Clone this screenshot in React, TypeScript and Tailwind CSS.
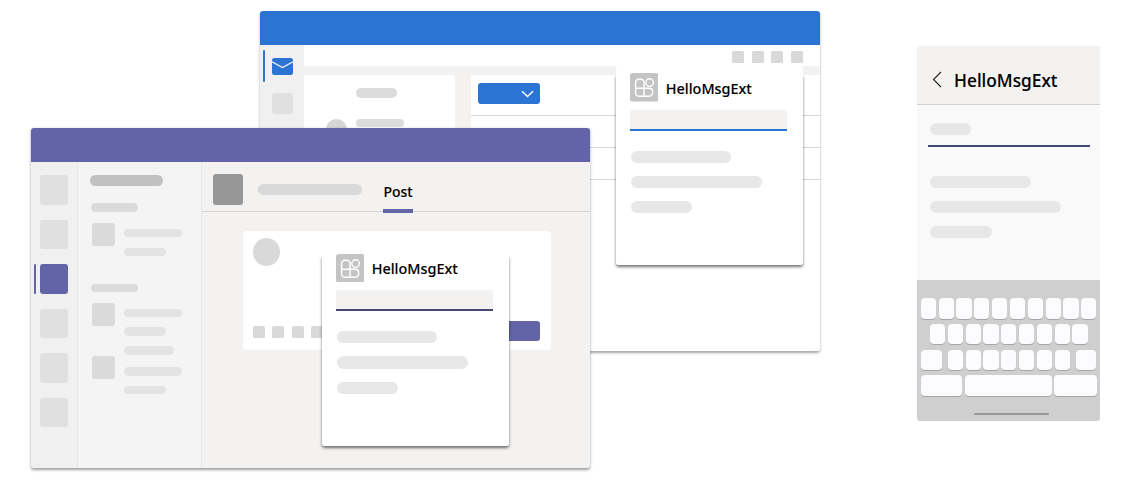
import React from "react";

const FONT = "font-['Noto_Sans','Open_Sans',sans-serif] [-webkit-text-stroke:0.12px_black]";

function Box({ className }: { className: string }) {
  return <div className={`shrink-0 ${className}`} />;
}

function AppIcon() {
  return (
    <svg viewBox="0 0 28.5 28.5" className="h-[28.5px] w-[28.5px] shrink-0">
      <rect width="28.5" height="28.5" rx="2.5" fill="#c4c4c4" />
      <g fill="none" stroke="#fff" strokeWidth="1.4">
        <path d="M14 15.2V9.3a3 3 0 0 0-3-3H8.8a3.2 3.2 0 0 0-3.2 3.2v10.6a3.2 3.2 0 0 0 3.2 3.2h10.6a3.2 3.2 0 0 0 3.2-3.2v-1.9a3 3 0 0 0-3-3H5.6M14 15.2v8.1" />
        <circle cx="19.6" cy="9.6" r="3.8" />
      </g>
    </svg>
  );
}

function ExtensionCard({ place, accent }: { place: string; accent: string }) {
  return (
    <section className={`absolute h-[199px] w-[187px] ${place}`}>
      <div className="absolute inset-x-0 top-2 bottom-0 rounded-[3px] shadow-[0_2px_3px_rgba(0,0,0,0.55)]" />
      <div className="relative flex h-full flex-col rounded-[3px] bg-white px-[14px] pt-[7.2px]">
        <div className="flex items-center gap-[7.5px]">
          <AppIcon />
          <h2 className={`${FONT} pt-[2px] text-[14.4px] leading-5 font-medium whitespace-nowrap text-black`}>HelloMsgExt</h2>
        </div>
        <div className={`mt-2 h-[21px] w-[157.5px] shrink-0 rounded-t-[2px] border-b-2 bg-[#f3f2f1] ${accent}`} />
        <div className="mt-[19.7px] ml-[1px] flex flex-col gap-[13px]">
          <Box className="h-[12.2px] w-[100px] rounded-full bg-[#e7e7e7]" />
          <Box className="h-[12.2px] w-[131px] rounded-full bg-[#e7e7e7]" />
          <Box className="h-[12.2px] w-[61.5px] rounded-full bg-[#e7e7e7]" />
        </div>
      </div>
    </section>
  );
}

function OutlookWindow() {
  return (
    <section className="absolute top-[11.3px] left-[260.3px] h-[340px] w-[559.7px] rounded-[3px] bg-white shadow-[0_1.5px_2.5px_rgba(0,0,0,0.35)]">
      <div className="flex h-full flex-col overflow-hidden rounded-[3px]">
        <header className="h-[33.7px] shrink-0 bg-[#2b74d4]" />
        <div className="flex min-h-0 flex-1">
          <nav className="flex w-[44px] shrink-0 flex-col bg-[#f0f0f0] pt-[5px]">
            <div className="flex items-start">
              <Box className="ml-[2.3px] h-[32px] w-[2.3px] rounded-full bg-[#2b74d4]" />
              <svg viewBox="0 0 21 17" className="mt-[8px] ml-[7.2px] h-[17px] w-[21px]">
                <rect width="21" height="17" rx="2.5" fill="#2b74d4" />
                <path d="M0 3.8 10.5 9.5 21 3.8" fill="none" stroke="#f0f0f0" strokeWidth="1.4" />
              </svg>
            </div>
            <Box className="mt-[11px] ml-[11.3px] h-[21px] w-[21px] rounded-[3px] bg-[#e0e0e0]" />
          </nav>
          <main className="flex min-w-0 flex-1 flex-col">
            <div className="flex h-[21px] shrink-0 justify-end gap-[7.5px] pt-[6px] pr-[17.4px]">
              <Box className="h-[12px] w-[12px] rounded-[1.5px] bg-[#d9d9d9]" />
              <Box className="h-[12px] w-[12px] rounded-[1.5px] bg-[#d9d9d9]" />
              <Box className="h-[12px] w-[12px] rounded-[1.5px] bg-[#d9d9d9]" />
              <Box className="h-[12px] w-[12px] rounded-[1.5px] bg-[#d9d9d9]" />
            </div>
            <Box className="h-[9px] bg-[#f3f2f1]" />
            <div className="flex min-h-0 flex-1 bg-[#f3f2f1]">
              <div className="flex w-[150.5px] flex-col rounded-tr-[2px] bg-white pt-[13px]">
                <Box className="ml-[51.3px] h-[10px] w-[41.5px] rounded-full bg-[#dcdcdc]" />
                <div className="mt-[21px] flex gap-[8.3px] pl-[21.5px]">
                  <Box className="h-[21.5px] w-[21.5px] rounded-full bg-[#d6d6d6]" />
                  <Box className="h-[8px] w-[48.5px] rounded-full bg-[#dcdcdc]" />
                </div>
              </div>
              <div className="ml-[16px] flex flex-1 flex-col bg-white">
                <div className="h-[41px] border-b border-[#d8d8d8] pt-[8px] pl-[7px]">
                  <div className="flex h-[21px] w-[62px] items-center justify-end rounded-[3px] bg-[#2b74d4] pr-[6px]">
                    <svg viewBox="0 0 13 8" className="mt-[2px] h-[8px] w-[13px]">
                      <path d="m1 1.2 5.5 5.3L12 1.2" fill="none" stroke="#fff" strokeWidth="1.5" />
                    </svg>
                  </div>
                </div>
                <Box className="h-[32px] border-b border-[#d8d8d8]" />
                <Box className="h-[32px] border-b border-[#d8d8d8]" />
              </div>
            </div>
          </main>
        </div>
      </div>
      <ExtensionCard place="top-[55px] left-[355.5px]" accent="border-[#2b74d4]" />
    </section>
  );
}

function RailItem({ active = false }: { active?: boolean }) {
  return (
    <div className="flex h-[29.5px] shrink-0">
      <div className={`ml-[3.5px] w-[2px] rounded-full ${active ? "bg-[#6264a7]" : "bg-transparent"}`} />
      <div className={`ml-[4px] w-[28px] rounded-[3px] ${active ? "bg-[#6264a7]" : "bg-[#e0e0e0]"}`} />
    </div>
  );
}

const LINE = "h-[8.5px] rounded-full bg-[#e3e3e3]";

function Group({ widths, className }: { widths: string[]; className: string }) {
  return (
    <div className={`flex items-start gap-[9px] pl-[14.8px] ${className}`}>
      <Box className="h-[23px] w-[23px] rounded-[3px] bg-[#dadada]" />
      <div className="flex flex-col gap-[10.2px] pt-[6px]">
        {widths.map((w, i) => (
          <Box key={i} className={`${LINE} ${w}`} />
        ))}
      </div>
    </div>
  );
}

function TeamsWindow() {
  return (
    <section className="absolute top-[128.2px] left-[30.5px] h-[340px] w-[559.8px] rounded-[3px] bg-[#f3f2f1] shadow-[0_1.5px_3px_rgba(0,0,0,0.38)]">
      <div className="flex h-full flex-col overflow-hidden rounded-[3px]">
        <header className="h-[34px] shrink-0 bg-[#6264a7]" />
        <div className="flex min-h-0 flex-1">
          <nav className="flex w-[47px] shrink-0 flex-col gap-[15px] border-r border-[#e7e7e7] bg-[#f0f0f0] pt-[13.3px]">
            <RailItem />
            <RailItem />
            <RailItem active />
            <RailItem />
            <RailItem />
            <RailItem />
          </nav>
          <aside className="flex w-[124px] shrink-0 flex-col border-r border-[#e7e7e7] bg-[#f4f4f4] pt-[13px]">
            <Box className="ml-[12.5px] h-[11px] w-[73px] rounded-full bg-[#c1c1c1]" />
            <Box className="mt-[17px] ml-[13.8px] h-[8.5px] w-[46.5px] rounded-full bg-[#dadada]" />
            <Group widths={["w-[58px]", "w-[41.5px]"]} className="mt-[11.3px] h-[61px]" />
            <Box className="ml-[13.8px] h-[8.5px] w-[46.5px] rounded-full bg-[#dadada]" />
            <Group widths={["w-[58px]", "w-[41.5px]", "w-[49.5px]"]} className="mt-[10.3px] h-[53.5px]" />
            <Group widths={["w-[58px]", "w-[41.5px]"]} className="[&>div:last-child]:pt-[11px]" />
          </aside>
          <main className="flex min-w-0 flex-1 flex-col">
            <div className="flex h-[50px] shrink-0 items-start border-b border-[#d6d6d6] pl-[11.5px]">
              <Box className="mt-[12.3px] h-[30.5px] w-[30px] rounded-[3px] bg-[#979797]" />
              <Box className="mt-[22.1px] ml-[14.8px] h-[11px] w-[104.5px] rounded-full bg-[#d9d9d9]" />
              <div className="ml-[20.5px] h-[50.6px] w-[30.3px] border-b-[4px] border-[#6264a7]">
                <span className={`${FONT} ml-[0.6px] block pt-[20px] text-[14px] leading-5 font-medium text-black`}>Post</span>
              </div>
            </div>
            <div className="mt-[19px] ml-[41.5px] flex h-[119px] w-[308px] flex-col justify-between rounded-[3px] bg-white pt-[7px] pr-[11px] pb-[8.8px] pl-[9.7px]">
              <Box className="h-[27.5px] w-[27.5px] rounded-full bg-[#d9d9d9]" />
              <div className="flex items-center gap-[7.5px]">
                <Box className="mt-[1px] h-[12px] w-[12px] rounded-[1.5px] bg-[#d9d9d9]" />
                <Box className="mt-[1px] h-[12px] w-[12px] rounded-[1.5px] bg-[#d9d9d9]" />
                <Box className="mt-[1px] h-[12px] w-[12px] rounded-[1.5px] bg-[#d9d9d9]" />
                <Box className="mt-[1px] h-[12px] w-[12px] rounded-[1.5px] bg-[#d9d9d9]" />
                <Box className="ml-auto h-[20px] w-[62px] rounded-[3px] bg-[#6264a7]" />
              </div>
            </div>
          </main>
        </div>
      </div>
      <ExtensionCard place="top-[118.6px] left-[291.2px]" accent="border-[#464775]" />
    </section>
  );
}

function Key({ className }: { className: string }) {
  return <div className={`h-[20.5px] shrink-0 rounded-[4px] bg-[#fcfcfe] shadow-[0_1px_0_#a6a6aa] ${className}`} />;
}

function Keys({ count }: { count: number }) {
  return (
    <>
      {Array.from({ length: count }, (_, i) => (
        <Key key={i} className="w-[15.2px]" />
      ))}
    </>
  );
}

function Phone() {
  return (
    <section className="absolute top-[46px] left-[916.5px] flex h-[375.3px] w-[183.5px] flex-col overflow-hidden rounded-[3px] bg-[#f9f9f9]">
      <header className="flex h-[59px] shrink-0 items-center border-b border-[#cfcfcf] bg-[#f3f2f1] pt-[9px] pl-[15px]">
        <svg viewBox="0 0 10 17" className="mt-[-1px] h-[17px] w-[10px]">
          <path d="M9 1 1.5 8.5 9 16" fill="none" stroke="#222" strokeWidth="1.1" />
        </svg>
        <h2 className={`${FONT} ml-[12.6px] pt-[2px] text-[17.3px] leading-6 font-medium whitespace-nowrap text-black`}>HelloMsgExt</h2>
      </header>
      <div className="flex flex-1 flex-col pt-[18px] pl-[13.5px]">
        <Box className="h-[12px] w-[41px] rounded-full bg-[#e7e7e7]" />
        <Box className="mt-[9.5px] ml-[-2px] h-[2.3px] w-[162px] bg-[#464775]" />
        <div className="mt-[28.8px] flex flex-col gap-[13px]">
          <Box className="h-[12.2px] w-[100.5px] rounded-full bg-[#e7e7e7]" />
          <Box className="h-[12.2px] w-[131px] rounded-full bg-[#e7e7e7]" />
          <Box className="h-[12.2px] w-[62px] rounded-full bg-[#e7e7e7]" />
        </div>
      </div>
      <div className="flex h-[141.8px] shrink-0 flex-col items-center gap-[5.2px] bg-[#cfcfcf] pt-[18.7px]">
        <div className="ml-[0.6px] flex gap-[2.65px]">
          <Keys count={10} />
        </div>
        <div className="ml-[1px] flex gap-[2.65px]">
          <Keys count={9} />
        </div>
        <div className="ml-[1px] flex gap-[6px]">
          <Key className="w-[20.5px]" />
          <div className="flex gap-[2.65px]">
            <Keys count={7} />
          </div>
          <Key className="w-[20.5px]" />
        </div>
        <div className="ml-[1px] flex gap-[2.8px]">
          <Key className="w-[41.5px]" />
          <Key className="w-[86.5px]" />
          <Key className="w-[42.5px]" />
        </div>
        <Box className="mt-[12px] ml-[6.5px] h-[2.5px] w-[75.5px] rounded-full bg-[#979797]" />
      </div>
    </section>
  );
}

export default function App() {
  return (
    <div className="relative h-[481px] w-[1140px] overflow-hidden bg-white">
      <OutlookWindow />
      <TeamsWindow />
      <Phone />
    </div>
  );
}
